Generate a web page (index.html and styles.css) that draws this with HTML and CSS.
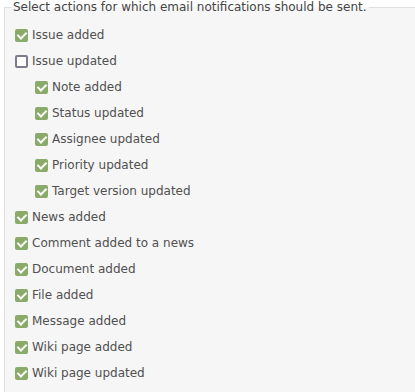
FILE: index.html
```html
<!DOCTYPE html>
<html lang="en">
<head>
    <meta charset="UTF-8">
    <title>Email notifications</title>
    <link rel="stylesheet" href="styles.css">
</head>
<body>
    <fieldset class="box">
        <legend>Select actions for which email notifications should be sent.</legend>
        <label class="opt"><input type="checkbox" checked><span>Issue added</span></label>
        <label class="opt"><input type="checkbox"><span>Issue updated</span></label>
        <label class="opt sub"><input type="checkbox" checked><span>Note added</span></label>
        <label class="opt sub"><input type="checkbox" checked><span>Status updated</span></label>
        <label class="opt sub"><input type="checkbox" checked><span>Assignee updated</span></label>
        <label class="opt sub"><input type="checkbox" checked><span>Priority updated</span></label>
        <label class="opt sub"><input type="checkbox" checked><span>Target version updated</span></label>
        <label class="opt"><input type="checkbox" checked><span>News added</span></label>
        <label class="opt"><input type="checkbox" checked><span>Comment added to a news</span></label>
        <label class="opt"><input type="checkbox" checked><span>Document added</span></label>
        <label class="opt"><input type="checkbox" checked><span>File added</span></label>
        <label class="opt"><input type="checkbox" checked><span>Message added</span></label>
        <label class="opt"><input type="checkbox" checked><span>Wiki page added</span></label>
        <label class="opt"><input type="checkbox" checked><span>Wiki page updated</span></label>
    </fieldset>
</body>
</html>
```

FILE: styles.css
```css
* { box-sizing: border-box; }
body {
    margin: 0; background: #fff;
    font-family: "DejaVu Sans", sans-serif; font-size: 12px; color: #505050;
}
.box {
    margin: 0 0 0 4px; padding: 8px 0 6px 10px;
    background: #f6f6f6; border: 1px solid #e0e0e0; border-right: none;
    min-height: 400px;
}
.box legend { padding: 0 2px; margin-left: -4px; color: #444; font-size: 12px; }
.opt { display: flex; align-items: center; height: 26px; }
.opt.sub { padding-left: 20px; }
.opt input {
    appearance: none; -webkit-appearance: none; margin: 0 4px 0 0;
    width: 13px; height: 13px; border-radius: 2px;
    border: 2px solid #7c7c8c; background: #fff; position: relative;
}
.opt input:checked { background: #8aaa6a; border-color: #8aaa6a; }
.opt input:checked::after {
    content: ""; position: absolute; left: 2px; top: -1px;
    width: 4px; height: 7px; border: solid #fff; border-width: 0 2px 2px 0;
    transform: rotate(45deg);
}
```
